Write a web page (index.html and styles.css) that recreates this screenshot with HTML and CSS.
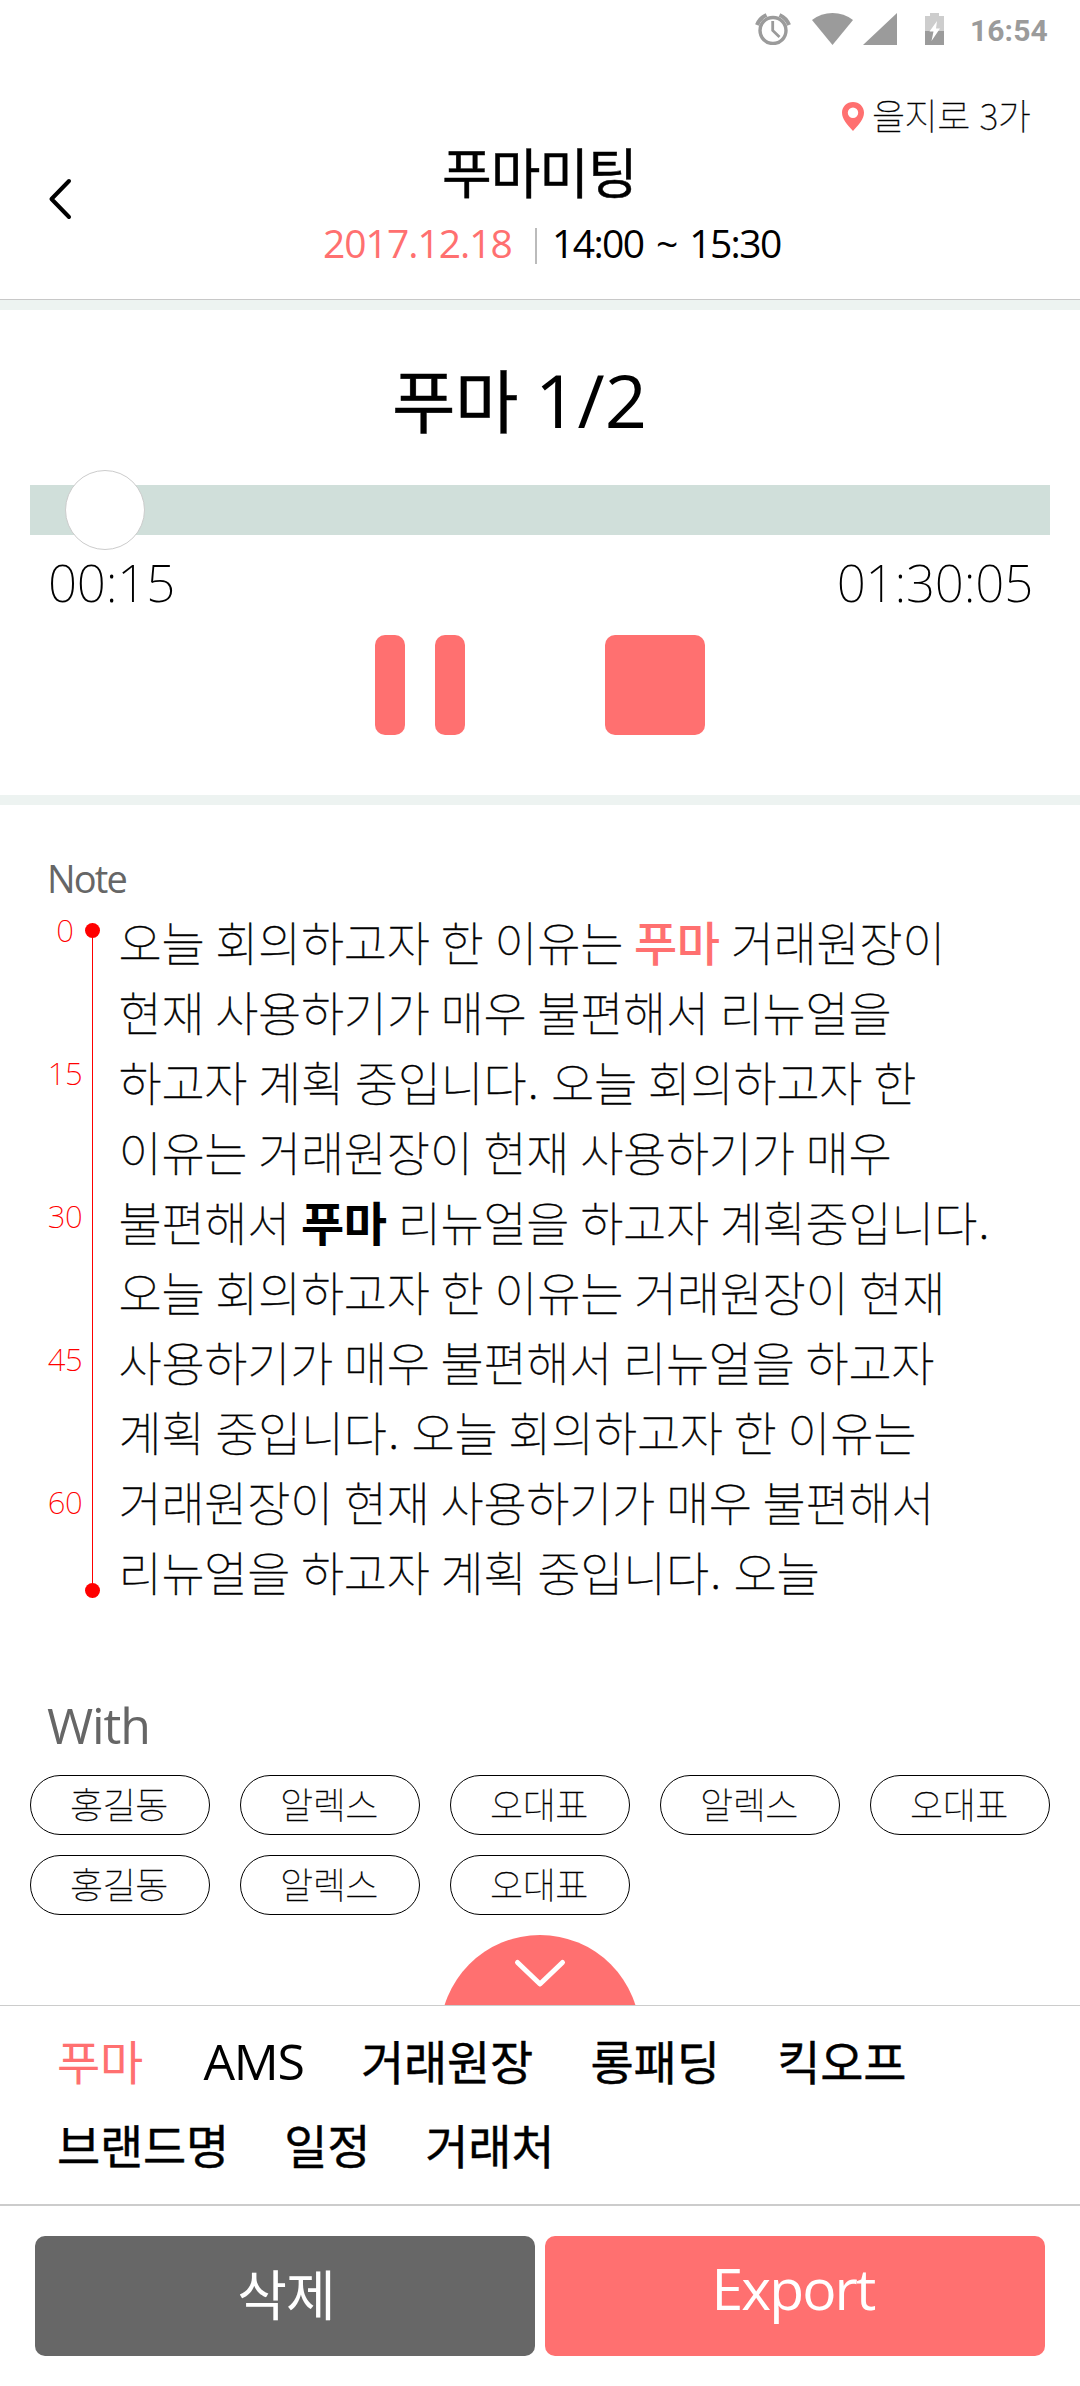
FILE: index.html
```html
<!DOCTYPE html>
<html lang="ko">
<head>
<meta charset="utf-8">
<title>푸마미팅</title>
<link rel="stylesheet" href="styles.css">
</head>
<body>
<div class="screen">
  <div class="status">
    <svg class="alarm" width="36" height="32" viewBox="0 0 36 32" fill="none" stroke="#9b9b9b">
      <circle cx="18" cy="17.5" r="13" stroke-width="3.4"/>
      <path d="M2 12Q4.500 5 11.500 2M34 12Q31.500 5 24.500 2" stroke-width="4"/>
      <path d="M17.700 8V17.500L24.500 24" stroke-width="2.800"/>
    </svg>
    <svg class="wifi" width="41" height="32" viewBox="0 0 41 32"><path d="M0 7Q9 0 20.500 0T41 7L20.500 32Z" fill="#9b9b9b"/></svg>
    <svg class="signal" width="34" height="32" viewBox="0 0 34 32"><path d="M34 0V32H0Z" fill="#9b9b9b"/></svg>
    <svg class="battery" width="19" height="32" viewBox="0 0 19 32">
      <path d="M0 3H5V0H14V3H19V18H0Z" fill="#cdcdcd"/><path d="M0 18H19V32H0Z" fill="#9b9b9b"/>
      <path d="M12 8L4.500 18.500H8.500L6.500 28L15 15.500H11Z" fill="#fff"/>
    </svg>
    <span class="clock">16:54</span>
  </div>

  <header class="header">
    <div class="place">
      <svg width="22" height="29" viewBox="0 0 22 29"><path fill-rule="evenodd" d="M11 0C4.800 0 0 4.700 0 10.500C0 17 5 22.500 11 29C17 22.500 22 17 22 10.500C22 4.700 17.200 0 11 0ZM11 5.500A5.200 5.200 0 1 1 11 15.900A5.200 5.200 0 1 1 11 5.500Z" fill="#ff7070"/></svg>
      <span>을지로 3가</span>
    </div>
    <div class="heading">
      <svg class="back" width="24" height="42" viewBox="0 0 24 42"><path d="M21 3L3.500 21L21 39" fill="none" stroke="#000" stroke-width="4" stroke-linecap="round" stroke-linejoin="round"/></svg>
      <div class="meeting">
        <h1>푸마미팅</h1>
        <div class="when"><span class="date">2017.12.18</span><i></i><span class="hours">14:00 ~ 15:30</span></div>
      </div>
    </div>
  </header>

  <section class="player">
    <h2><span>푸마</span><span class="count">1/2</span></h2>
    <div class="track"><div class="knob"></div></div>
    <div class="times"><span>00:15</span><span>01:30:05</span></div>
    <div class="controls"><div class="pause"><i></i><i></i></div><div class="stop"></div></div>
  </section>

  <section class="note">
    <h3>Note</h3>
    <div class="note-body">
      <div class="ticks"><span>0</span><span>15</span><span>30</span><span>45</span><span>60</span></div>
      <div class="rail"><i></i><i></i></div>
      <div class="text">
        <p>오늘 회의하고자 한 이유는 <b class="hit">푸마</b> 거래원장이</p>
        <p>현재 사용하기가 매우 불편해서 리뉴얼을</p>
        <p>하고자 계획 중입니다<span class="dot">.</span> 오늘 회의하고자 한</p>
        <p>이유는 거래원장이 현재 사용하기가 매우</p>
        <p>불편해서 <b>푸마</b> 리뉴얼을 하고자 계획중입니다<span class="dot">.</span></p>
        <p>오늘 회의하고자 한 이유는 거래원장이 현재</p>
        <p>사용하기가 매우 불편해서 리뉴얼을 하고자</p>
        <p>계획 중입니다<span class="dot">.</span> 오늘 회의하고자 한 이유는</p>
        <p>거래원장이 현재 사용하기가 매우 불편해서</p>
        <p>리뉴얼을 하고자 계획 중입니다<span class="dot">.</span> 오늘</p>
      </div>
    </div>
  </section>

  <section class="with">
    <h3>With</h3>
    <div class="chips">
      <span>홍길동</span><span>알렉스</span><span>오대표</span><span>알렉스</span><span>오대표</span>
      <span>홍길동</span><span>알렉스</span><span>오대표</span>
    </div>
  </section>

  <div class="toggle">
    <svg width="192" height="70" viewBox="0 0 192 70"><circle cx="96" cy="100" r="100" fill="#ff7070"/><path d="M73.500 27.500L96 49L118.500 27.500" fill="none" stroke="#fff" stroke-width="5" stroke-linecap="round" stroke-linejoin="round"/></svg>
  </div>

  <section class="keywords">
    <div class="row"><span class="on">푸마</span><span class="latin">AMS</span><span>거래원장</span><span>롱패딩</span><span>킥오프</span></div>
    <div class="row tight"><span>브랜드명</span><span>일정</span><span>거래처</span></div>
  </section>

  <footer class="actions">
    <div class="btn delete">삭제</div>
    <div class="btn export">Export</div>
  </footer>
</div>
</body>
</html>
```
FILE: styles.css
```css
* { box-sizing: border-box; margin: 0; padding: 0; }
body { background: #fff; color: #000; font-family: "Noto Sans CJK KR", sans-serif; }
svg { display: block; flex: none; }
h1, h2, h3 { font-weight: 400; }
.screen { width: 1080px; height: 2386px; overflow: hidden; display: flex; flex-direction: column; }
.screen > * { flex: none; }

.status { height: 80px; padding: 13px 32px 0 0; display: flex; justify-content: flex-end; align-items: flex-start; }
.wifi { margin-left: 21px; }
.signal { margin-left: 10px; }
.battery { margin-left: 28px; }
.clock { width: 78px; margin-left: 26px; font: 700 30px/35px Roboto, sans-serif; letter-spacing: .1px; color: #9b9b9b; white-space: nowrap; }

.header { height: 220px; border-bottom: 1px solid #c8c8c8; }
.place { height: 60px; padding: 0 48px 0 0; display: flex; justify-content: flex-end; gap: 8px; align-items: flex-start; }
.place svg { margin-top: 22px; }
.place span { width: 160px; font-size: 36px; line-height: 68px; font-weight: 100; letter-spacing: -.5px; white-space: nowrap; -webkit-text-stroke: .3px #000; }
.heading { display: flex; align-items: flex-start; }
.back { margin: 38px 0 0 48px; }
.meeting { width: 936px; }
.meeting h1 { margin-top: -1px; padding-left: 370px; font-size: 54px; line-height: 64px; letter-spacing: -1px; -webkit-text-stroke: .4px #000; }
.when { display: flex; align-items: center; margin-top: 18px; padding-left: 251px; font: 400 39px/44px "Open Sans", sans-serif; white-space: nowrap; }
.when i { width: 2px; height: 36px; background: #bbb; margin-top: 6px; }
.date { width: 212px; color: #ff7070; letter-spacing: -1px; }
.hours { margin-left: 15px; letter-spacing: -1.600px; word-spacing: 4px; }

.player { height: 505px; border: solid #edf3f1; border-width: 10px 0; padding: 50px 30px 0; }
.player h2 { height: 90px; padding-left: 362px; display: flex; gap: 17px; font-size: 69px; line-height: 76px; letter-spacing: -.5px; align-items: baseline; -webkit-text-stroke: .4px #000; }
.count { font-family: "Open Sans", sans-serif; font-size: 74px; letter-spacing: .2px; -webkit-text-stroke: 0; }
.track { height: 50px; margin-top: 35px; background: #d0dfda; position: relative; }
.knob { position: absolute; left: 35px; top: -15px; width: 80px; height: 80px; border-radius: 50%; background: #fff; border: 1px solid #ccc; }
.times { display: flex; justify-content: space-between; padding: 17px 17px 0 18px; font: 200 51px/60px "Noto Sans", sans-serif; letter-spacing: -.2px; }
.controls { display: flex; justify-content: center; gap: 140px; margin-top: 23px; }
.pause { display: flex; gap: 30px; }
.pause i { width: 30px; height: 100px; border-radius: 10px; background: #ff7070; }
.stop { width: 100px; height: 100px; border-radius: 10px; background: #ff7070; }

.note { height: 875px; padding: 47px 0 0 47px; }
.note h3 { height: 54px; font: 400 38px/52px "Open Sans", sans-serif; color: #666; letter-spacing: -1.800px; }
.note-body { display: flex; }
.ticks { width: 36px; margin-top: 1px; display: flex; flex-direction: column; gap: 103px; font: 200 31px/40px "Noto Sans", sans-serif; text-align: center; color: #f00; padding-top: 3px; letter-spacing: -.3px; }
.ticks span { white-space: nowrap; }
.rail { width: 15px; height: 675px; margin: 17px 0 0 2px; display: flex; flex-direction: column; justify-content: space-between; background: linear-gradient(#f00, #f00) 7px 0 / 1px 100% no-repeat; }
.rail i { height: 15px; border-radius: 50%; background: #f00; }
.text { margin-left: 18.500px; font-size: 47px; line-height: 70px; font-weight: 100; letter-spacing: -.35px; word-spacing: -1.900px; }
.text p { white-space: nowrap; height: 70px; -webkit-text-stroke: .45px #000; }
.text b { font-weight: 700; -webkit-text-stroke: 0; }
.text .hit { color: #ff7070; font-weight: 500; }
.text .dot { letter-spacing: 1.500px; margin-left: 1.500px; }

.with { height: 255px; padding: 0 30px; }
.with h3 { height: 95px; padding: 10px 0 0 17px; font: 400 50px/70px "Open Sans", sans-serif; color: #666; letter-spacing: -1.100px; }
.chips { display: grid; grid-template-columns: repeat(5, 180px); gap: 20px 30px; }
.chips span { height: 60px; border: 1px solid #000; border-radius: 30px; font-size: 36px; line-height: 54px; font-weight: 100; text-align: center; letter-spacing: -.4px; padding-right: 2px; -webkit-text-stroke: .3px #000; }

.toggle { height: 70px; display: flex; justify-content: center; }
.keywords { height: 201px; border: solid #ccc; border-width: 1px 0 2px; padding: 14px 57px 0; }
.row { display: flex; gap: 57.500px; height: 84px; font-size: 47px; line-height: 80px; letter-spacing: -.2px; -webkit-text-stroke: .4px #000; }
.row.tight { gap: 55px; }
.row .on { color: #ff7070; margin-right: 3px; -webkit-text-stroke: 0; }
.row .latin { font-family: "Open Sans", sans-serif; font-size: 50px; letter-spacing: -1.400px; line-height: 83px; -webkit-text-stroke: 0; }
.actions { padding: 30px 35px; display: flex; gap: 10px; }
.btn { width: 500px; height: 120px; border-radius: 10px; color: #fff; text-align: center; }
.delete { background: #676767; font-size: 54px; line-height: 114px; letter-spacing: -1px; padding-left: 2px; }
.export { background: #ff7070; font: 400 57px/104px "Open Sans", sans-serif; letter-spacing: -1.900px; padding-right: 4px; }
```
